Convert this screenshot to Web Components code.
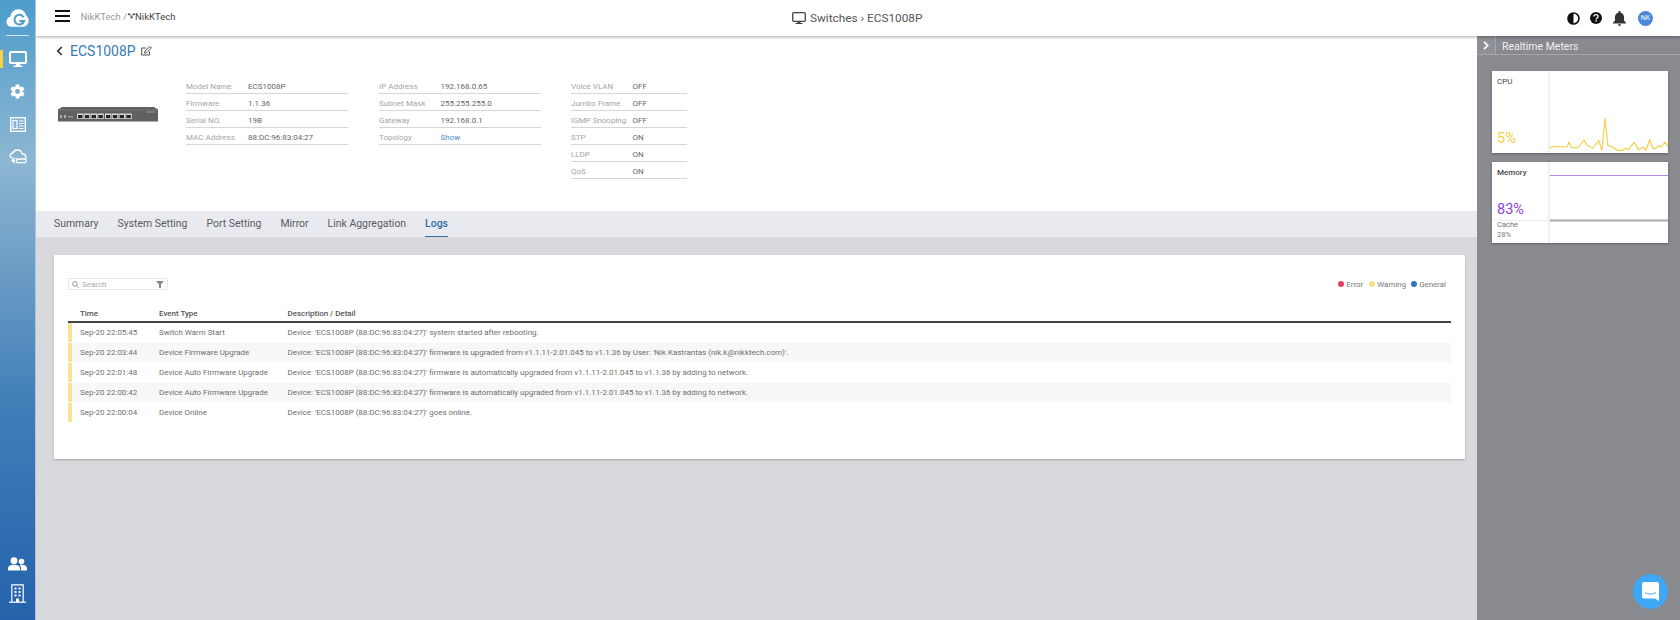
<!DOCTYPE html>
<html>
<head>
<meta charset="utf-8">
<title>ECS1008P</title>
<style>
  html, body { margin: 0; height: 100%; overflow: hidden; background: #d7d9dd; font-family: Roboto, "Liberation Sans", sans-serif; }
  app-shell { height: 620px; }
</style>
</head>
<body>
<app-shell>
  <side-nav slot="nav"></side-nav>
  <top-bar slot="top"></top-bar>
  <device-header slot="main"></device-header>
  <tab-bar slot="main" active="Logs"></tab-bar>
  <log-panel slot="main"></log-panel>
  <meters-panel slot="side">
    <meter-card label="CPU" value="5%" color="#f4d23f" kind="cpu"></meter-card>
    <meter-card label="Memory" value="83%" color="#8a3fd8" kind="memory"></meter-card>
  </meters-panel>
</app-shell>
<chat-bubble></chat-bubble>

<script>
class AppShell extends HTMLElement {
  constructor() {
    super();
    this.attachShadow({ mode: 'open' });
    this.shadowRoot.innerHTML = `
      <style>
        :host { display: flex; width: 1680px; }
        .col { flex: 1; display: flex; flex-direction: column; min-width: 0; }
        .row { flex: 1; display: flex; min-height: 0; }
        .main { flex: 1; display: flex; flex-direction: column; min-width: 0; }
      </style>
      <slot name="nav"></slot>
      <div class="col">
        <slot name="top"></slot>
        <div class="row">
          <div class="main"><slot name="main"></slot></div>
          <slot name="side"></slot>
        </div>
      </div>
    `;
  }
}

class SideNav extends HTMLElement {
  constructor() {
    super();
    this.attachShadow({ mode: 'open' });
    this.shadowRoot.innerHTML = `
      <style>
        :host { display: flex; flex-direction: column; align-items: center; width: 35px; height: 620px; border-right: 1px solid #a9c6de; background: linear-gradient(180deg, #4c9ccb 0%, #6ba9ce 12%, #8db6d2 26%, #6f9fc6 42%, #3f7db8 66%, #2463ab 100%); position: relative; z-index: 3; }
        .logo { height: 35px; width: 23px; border-bottom: 1px solid #cfe3f0; display: flex; align-items: center; justify-content: center; flex: none; }
        .item { width: 35px; height: 32.5px; display: flex; align-items: center; justify-content: center; flex: none; position: relative; }
        .item.active::before { content: ''; position: absolute; left: 0; top: 7px; width: 3px; height: 18px; background: #f6d24a; }
        .first { margin-top: 7px; }
        .spacer { flex: 1; }
        .bottom { height: 30px; }
        .people { padding-top: 2px; box-sizing: border-box; }
        .end { margin-bottom: 12px; }
        svg { display: block; }
      </style>
      <div class="logo">
        <svg width="25" height="22" viewBox="0 0 25 22">
          <path d="M6 20.500C2.800 20.500 .5 18 .5 15c0-2.700 1.800-4.800 4.300-5.300C5.200 5 9 1.500 13.500 1.500c4 0 7.300 2.700 8.300 6.400 1.700 1.300 2.800 3.500 2.800 6 0 3.700-2.800 6.600-6.500 6.600z" fill="#fff"/>
          <path d="M19.200 10.200a5.300 5.300 0 1 0 .4 4.200h-5" fill="none" stroke="#4d9dca" stroke-width="2.200"/>
        </svg>
      </div>
      <div class="item active first">
        <svg width="18" height="17" viewBox="0 0 18 17"><rect x="1" y="1" width="16" height="11" rx="1" fill="none" stroke="#fff" stroke-width="2"/><path d="M7 13h4v1.500H7zM4.500 14.500h9V16h-9z" fill="#fff"/></svg>
      </div>
      <div class="item">
        <svg width="17" height="17" viewBox="0 0 24 24"><path fill="#fff" d="M19.400 13c.1-.3.100-.7.100-1s0-.7-.1-1l2.100-1.600c.2-.2.200-.4.100-.6l-2-3.500c-.1-.2-.4-.3-.6-.2l-2.500 1c-.5-.4-1.100-.7-1.700-1l-.4-2.700c0-.2-.2-.4-.5-.4h-4c-.2 0-.4.200-.5.400l-.4 2.700c-.6.200-1.200.6-1.700 1l-2.500-1c-.2-.1-.5 0-.6.200l-2 3.500c-.1.200-.1.500.1.600L4.600 11c0 .3-.1.700-.1 1s0 .7.100 1l-2.100 1.600c-.2.200-.2.400-.1.600l2 3.500c.1.200.4.300.6.200l2.500-1c.5.400 1.100.7 1.700 1l.4 2.700c0 .2.200.4.500.4h4c.2 0 .4-.2.500-.4l.4-2.700c.6-.2 1.200-.6 1.700-1l2.500 1c.2.100.5 0 .6-.2l2-3.500c.1-.2.100-.5-.1-.6zM12 15.500a3.500 3.500 0 1 1 0-7 3.500 3.500 0 0 1 0 7z"/></svg>
      </div>
      <div class="item">
        <svg width="16" height="15" viewBox="0 0 16 15"><rect x=".7" y=".7" width="14.600" height="13.600" fill="none" stroke="#fff" stroke-width="1.400"/><rect x="3" y="3.500" width="4" height="8" fill="none" stroke="#fff" stroke-width="1.200"/><path d="M9 4h4.500M9 6.500h4.500M9 9h4.500M9 11.500h4.500" stroke="#fff" stroke-width="1.200"/></svg>
      </div>
      <div class="item">
        <svg width="18" height="16" viewBox="0 0 18 16"><path d="M3.500 9C1.500 8.500 1 7.200 1.300 6c.3-1.300 1.300-2 2.500-2C4.500 2.200 6.200 1 8.300 1c2.300 0 4.200 1.500 4.700 3.800 2.200 0 3.800 1.500 3.800 3.400 0 .5-.1.900-.3 1.300" fill="none" stroke="#fff" stroke-width="1.400"/><path d="M6 9 3 11.500 6 14" fill="none" stroke="#fff" stroke-width="1.300"/><path d="M3 11.500h3" stroke="#fff" stroke-width="1.300"/><rect x="7.500" y="10" width="9.500" height="3.600" rx=".8" fill="none" stroke="#fff" stroke-width="1.300"/></svg>
      </div>
      <div class="spacer"></div>
      <div class="item bottom people">
        <svg width="19" height="14" viewBox="0 0 19 14"><circle cx="6" cy="3.700" r="3.400" fill="#fff"/><circle cx="13.500" cy="4.500" r="2.800" fill="#fff"/><path d="M0 13.500v-2.300C0 9 2.700 7.700 6 7.700s6 1.300 6 3.500v2.300z" fill="#fff"/><path d="M13 13.500v-2.500c0-1.200-.5-2.200-1.400-3 .6-.2 1.300-.3 2-.3 2.700 0 5.400 1.200 5.400 3.200v2.600z" fill="#fff"/></svg>
      </div>
      <div class="item bottom end">
        <svg width="17" height="19" viewBox="0 0 17 19"><path d="M2.800 18V.8h11.400V18" fill="none" stroke="#fff" stroke-width="1.200"/><path d="M0 18.200h17" stroke="#fff" stroke-width="1.200"/><path d="M5.500 3.500h2v2h-2zM9.500 3.500h2v2h-2zM5.500 7h2v2h-2zM9.500 7h2v2h-2zM5.500 10.500h2v2h-2zM9.500 10.500h2v2h-2zM7 14.500h3V18H7z" fill="#fff"/></svg>
      </div>
    `;
  }
}

class TopBar extends HTMLElement {
  constructor() {
    super();
    this.attachShadow({ mode: 'open' });
    this.shadowRoot.innerHTML = `
      <style>
        :host { display: flex; align-items: center; height: 36px; background: #fff; box-shadow: 0 1px 3px rgba(0,0,0,.35); position: relative; z-index: 2; font-family: Roboto, sans-serif; }
        .left { flex: 1; display: flex; align-items: center; padding: 0 0 4px 19px; }
        .burger { width: 15px; height: 12px; border-top: 2px solid #111; border-bottom: 2px solid #111; position: relative; box-sizing: border-box; margin-right: 10.500px; }
        .burger::after { content: ''; position: absolute; left: 0; right: 0; top: 3px; height: 2px; background: #111; }
        .crumb { font-size: 9.500px; color: #9a9a9a; white-space: nowrap; display: flex; align-items: center; }
        .crumb b { font-weight: 400; color: #444; }
        .crumb svg { margin: 0 .5px 0 .5px; }
        .title { display: flex; align-items: center; font-size: 11.800px; color: #555; white-space: nowrap; position: absolute; left: 756px; }
        .title svg { margin-right: 4px; }
        .right { display: flex; align-items: center; padding-right: 27px; }
        .right > * { flex: none; }
        .avatar { width: 15px; height: 15px; border-radius: 50%; background: #4a86dc; color: #fff; font-size: 7px; display: flex; align-items: center; justify-content: center; margin-left: 12px; }
        .gap { margin-left: 10px; }
      </style>
      <div class="left">
        <div class="burger"></div>
        <div class="crumb">NikKTech&nbsp;/
          <svg width="7" height="6" viewBox="0 0 9 7"><circle cx="1.200" cy="1.200" r="1.100" fill="#333"/><circle cx="7.800" cy="1.200" r="1.100" fill="#333"/><circle cx="4.500" cy="5.500" r="1.300" fill="#333"/><path d="M1.200 1.200 4.500 5.500 7.800 1.200 4.500 2.500z" fill="none" stroke="#333" stroke-width=".6"/></svg>
          <b>NikKTech</b>
        </div>
      </div>
      <div class="title">
        <svg width="14" height="13" viewBox="0 0 14 13"><rect x=".7" y=".7" width="12.600" height="8.600" rx="1" fill="none" stroke="#444" stroke-width="1.300"/><path d="M5.500 10h3v1h-3zM3.500 11h7v1h-7z" fill="#444"/></svg>
        Switches › ECS1008P
      </div>
      <div class="right">
        <svg width="13" height="13" viewBox="0 0 13 13"><circle cx="6.500" cy="6.500" r="5.500" fill="#fff" stroke="#111" stroke-width="1.600"/><path d="M6.500 1a5.500 5.500 0 0 1 0 11z" fill="#111" transform="matrix(-1 0 0 1 13 0)"/></svg>
        <svg class="gap" width="12" height="12" viewBox="0 0 12 12"><circle cx="6" cy="6" r="6" fill="#111"/><path d="M3.900 4.600C3.900 3.400 4.800 2.600 6 2.600s2.100.8 2.100 1.900c0 1.500-2 1.500-2 3" fill="none" stroke="#fff" stroke-width="1.300"/><rect x="5.400" y="8.300" width="1.400" height="1.400" fill="#fff"/></svg>
        <svg class="gap" width="13" height="15" viewBox="0 0 13 15" style="margin-left:11px"><path d="M6.500 0c.7 0 1.100.5 1.100 1.200v.5c2.300.5 3.500 2.400 3.500 4.700v3.300L13 11.700v.8H0v-.8l1.900-2V6.400c0-2.300 1.200-4.200 3.500-4.700v-.5C5.400.5 5.800 0 6.500 0zM5 13.300h3C8 14.200 7.300 15 6.500 15S5 14.200 5 13.300z" fill="#333"/></svg>
        <div class="avatar">NK</div>
      </div>
    `;
  }
}

class InfoTable extends HTMLElement {
  constructor() {
    super();
    this.attachShadow({ mode: 'open' });
  }
  connectedCallback() {
    const rows = JSON.parse(this.getAttribute('rows'));
    const labelWidth = this.getAttribute('label-width');
    this.shadowRoot.innerHTML = `
      <style>
        :host { display: block; font-size: 8px; }
        .r { display: flex; height: 16.900px; box-sizing: border-box; align-items: center; padding-top: 3px; border-bottom: 1px solid #d6d6d6; }
        .l { width: ${labelWidth}px; color: #a5a5a5; flex: none; white-space: nowrap; }
        .v { color: #666; white-space: nowrap; }
        .v.link { color: #4a8cc8; }
      </style>
      ${rows.map(r => `<div class="r"><span class="l">${r[0]}</span><span class="v ${r[2] || ''}">${r[1]}</span></div>`).join('')}
    `;
  }
}

class DeviceHeader extends HTMLElement {
  constructor() {
    super();
    this.attachShadow({ mode: 'open' });
    const ports = [0, 1, 2, 3, 4, 5, 6, 7].map(i => {
      const x = 19 + i * 6.800 + (i > 3 ? .8 : 0);
      return `<rect x="${x}" y="6.500" width="6.400" height="5.500" fill="#d9d9d5"/><rect x="${x + 1}" y="8" width="4.400" height="3.200" fill="#232323"/>`;
    }).join('');
    this.shadowRoot.innerHTML = `
      <style>
        :host { display: block; height: 175px; background: #fff; box-sizing: border-box; padding: 0 0 0 18px; flex: none; }
        .head { display: flex; align-items: center; height: 29px; }
        .back { margin: 0 7px 0 2px; display: block; }
        h1 { margin: 0; font: 400 14px Roboto, sans-serif; color: #3a7ab5; }
        .edit { margin-left: 5px; display: block; }
        .body { display: flex; margin-top: 12.500px; }
        .pic { width: 132px; padding: 29px 0 0 4px; box-sizing: border-box; flex: none; }
        .pic svg { display: block; }
        info-table:nth-of-type(1) { width: 162px; }
        info-table:nth-of-type(2) { width: 162px; margin-left: 31px; }
        info-table:nth-of-type(3) { width: 116px; margin-left: 30px; }
      </style>
      <div class="head">
        <svg class="back" width="7" height="10" viewBox="0 0 7 10"><path d="M5.800 1 1.800 5l4 4" fill="none" stroke="#333" stroke-width="1.700"/></svg>
        <h1>ECS1008P</h1>
        <svg class="edit" width="11" height="10" viewBox="0 0 11 10"><path d="M8.500 5.500V9H.7V2h4.500" fill="none" stroke="#555" stroke-width="1"/><path d="M3.500 7.200 4 5l5-4.500 1.500 1.500-5 4.800z" fill="none" stroke="#555" stroke-width="1"/></svg>
      </div>
      <div class="body">
        <div class="pic">
          <svg width="100" height="15" viewBox="0 0 100 15">
            <path d="M0 2.500 4 0h92l4 2.500V14.500H0z" fill="#5f6062"/>
            <rect x="0" y="2.500" width="100" height="1" fill="#77787a"/>
            <rect x="2" y="8" width="2" height="3" fill="#aaa"/><rect x="6" y="8" width="2" height="3" fill="#aaa"/><rect x="10" y="9" width="5" height="1.500" fill="#999"/>
            ${ports}
            <rect x="88" y="4.500" width="9" height="1" fill="#999"/>
          </svg>
        </div>
        <info-table label-width="62" rows='[["Model Name","ECS1008P"],["Firmware","1.1.36"],["Serial NO.","19B"],["MAC Address","88:DC:96:83:04:27"]]'></info-table>
        <info-table label-width="61.500" rows='[["IP Address","192.168.0.65"],["Subnet Mask","255.255.255.0"],["Gateway","192.168.0.1"],["Topology","Show","link"]]'></info-table>
        <info-table label-width="61.500" rows='[["Voice VLAN","OFF"],["Jumbo Frame","OFF"],["IGMP Snooping","OFF"],["STP","ON"],["LLDP","ON"],["QoS","ON"]]'></info-table>
      </div>
    `;
  }
}

class TabBar extends HTMLElement {
  constructor() {
    super();
    this.attachShadow({ mode: 'open' });
  }
  connectedCallback() {
    const active = this.getAttribute('active');
    const tabs = ['Summary', 'System Setting', 'Port Setting', 'Mirror', 'Link Aggregation', 'Logs'];
    this.shadowRoot.innerHTML = `
      <style>
        :host { display: flex; gap: 19px; height: 26px; box-sizing: border-box; padding-left: 18px; background: #e8eaef; flex: none; font-size: 10.450px; }
        .t { color: #5c5c5c; display: flex; align-items: center; box-sizing: border-box; border-bottom: 1px solid transparent; padding-bottom: 1px; white-space: nowrap; }
        .t.on { color: #2f6ea5; font-weight: 500; border-bottom-color: #2f6ea5; }
      </style>
      ${tabs.map(t => `<div class="t ${t === active ? 'on' : ''}">${t}</div>`).join('')}
    `;
  }
}

const LOGS = [
  ['Sep-20 22:05:45', 'Switch Warm Start', "Device: 'ECS1008P (88:DC:96:83:04:27)' system started after rebooting."],
  ['Sep-20 22:03:44', 'Device Firmware Upgrade', "Device: 'ECS1008P (88:DC:96:83:04:27)' firmware is upgraded from v1.1.11-2.01.045 to v1.1.36 by User: 'Nik Kastrantas (nik.k@nikktech.com)'."],
  ['Sep-20 22:01:48', 'Device Auto Firmware Upgrade', "Device: 'ECS1008P (88:DC:96:83:04:27)' firmware is automatically upgraded from v1.1.11-2.01.045 to v1.1.36 by adding to network."],
  ['Sep-20 22:00:42', 'Device Auto Firmware Upgrade', "Device: 'ECS1008P (88:DC:96:83:04:27)' firmware is automatically upgraded from v1.1.11-2.01.045 to v1.1.36 by adding to network."],
  ['Sep-20 22:00:04', 'Device Online', "Device: 'ECS1008P (88:DC:96:83:04:27)' goes online."]
];

class LogPanel extends HTMLElement {
  constructor() {
    super();
    this.attachShadow({ mode: 'open' });
    this.shadowRoot.innerHTML = `
      <style>
        :host { display: block; flex: 1; padding: 18px 12px 0 18px; background: #d7d9dd; }
        .card { height: 204px; background: #fff; box-shadow: 0 1px 2px rgba(0,0,0,.25); box-sizing: border-box; padding: 23px 14px 0 14px; font-size: 7.960px; }
        .tools { display: flex; align-items: center; justify-content: space-between; height: 12px; }
        .search { width: 100px; height: 12px; box-sizing: border-box; border: 1px solid #e8e8e8; display: flex; align-items: center; padding: 0 3px; color: #aaa; }
        .search svg:first-child { margin-right: 3px; }
        .search span { flex: 1; }
        .legend { display: flex; align-items: center; color: #777; padding-right: 5px; font-size: 7.900px; }
        .dot { width: 6px; height: 6px; border-radius: 50%; margin: 0 2px 0 4px; }
        .row { display: grid; grid-template-columns: 79px 128.500px 1fr; padding-left: 12px; align-items: center; white-space: nowrap; }
        .hd { height: 21px; margin-top: 12px; box-sizing: border-box; border-bottom: 2px solid #444; font-weight: 500; color: #555; padding-top: 3px; }
        .log { height: 19px; margin-bottom: 1px; border-left: 4px solid #f8e394; padding-left: 8px; color: #6e6e6e; }
        .log.alt { background: #f7f7f7; }
      </style>
      <div class="card">
        <div class="tools">
          <div class="search">
            <svg width="7" height="7" viewBox="0 0 7 7"><circle cx="2.900" cy="2.900" r="2.300" fill="none" stroke="#888" stroke-width=".9"/><path d="M4.600 4.600 6.700 6.700" stroke="#888" stroke-width=".9"/></svg>
            <span>Search</span>
            <svg width="8" height="7" viewBox="0 0 8 7"><path d="M0 0h8L5 3.500V7H3V3.500z" fill="#888"/></svg>
          </div>
          <div class="legend">
            <i class="dot" style="background:#e2405f"></i>Error
            <i class="dot" style="background:#f7e08a;margin-left:6px"></i>Warning
            <i class="dot" style="background:#2f74c8;margin-left:5px"></i>General
          </div>
        </div>
        <div class="row hd"><span>Time</span><span>Event Type</span><span>Description / Detail</span></div>
        ${LOGS.map((l, i) => `<div class="row log ${i % 2 ? 'alt' : ''}"><span>${l[0]}</span><span>${l[1]}</span><span>${l[2]}</span></div>`).join('')}
      </div>
    `;
  }
}

class MetersPanel extends HTMLElement {
  constructor() {
    super();
    this.attachShadow({ mode: 'open' });
    this.shadowRoot.innerHTML = `
      <style>
        :host { display: flex; flex-direction: column; width: 203px; background: #898a8f; flex: none; height: 584px; }
        .bar { display: flex; align-items: center; height: 19px; box-sizing: border-box; border-bottom: 1px solid #a6a7ab; color: #f0f0f0; font-size: 10.500px; flex: none; }
        .bar span { padding-top: 2px; }
        .toggle { width: 19px; height: 18px; box-sizing: border-box; border-right: 1px solid #a6a7ab; display: flex; align-items: center; justify-content: center; margin-right: 6px; background: #8f9095; }
        .body { display: flex; flex-direction: column; gap: 9px; padding: 16px 12px 0 15px; }
      </style>
      <div class="bar">
        <div class="toggle"><svg width="6" height="9" viewBox="0 0 6 9"><path d="M1 .8 4.700 4.500 1 8.200" fill="none" stroke="#fff" stroke-width="1.700"/></svg></div>
        <span>Realtime Meters</span>
      </div>
      <div class="body"><slot></slot></div>
    `;
  }
}

// points traced off the CPU sparkline, in chart px
const CPU_POINTS = [[0,64],[2.300,62],[5.700,61.300],[10.700,61.700],[18,62],[20,57.300],[22.700,62.700],[29,62.700],[35,55],[38,60.300],[44,63],[49.700,55.700],[53,65.300],[56,33.300],[59,60.700],[64,62],[68,65.300],[74,65.300],[76.700,63.300],[79.300,64.700],[85.300,57.300],[89.300,64.700],[94,62],[97,65.300],[100.700,54.700],[104,63.300],[106.700,63.300],[109.700,60.700],[112.300,62],[116,57],[119,62]];

class MeterCard extends HTMLElement {
  constructor() {
    super();
    this.attachShadow({ mode: 'open' });
  }
  connectedCallback() {
    const label = this.getAttribute('label');
    const value = this.getAttribute('value');
    const color = this.getAttribute('color');
    const memory = this.getAttribute('kind') === 'memory';
    const chart = memory
      ? `<svg width="118" height="82" viewBox="0 0 118 82"><path d="M0 13.500h118" stroke="#b48be0" stroke-width="1"/><path d="M0 58.500h118" stroke="#aaa" stroke-width="2"/></svg>`
      : `<svg width="118" height="82" viewBox="0 0 118 82"><polyline points="${CPU_POINTS.map(p => p.join(',')).join(' ')}" transform="translate(-1,14)" fill="none" stroke="#f2d14f" stroke-width="1.200"/></svg>`;
    this.shadowRoot.innerHTML = `
      <style>
        :host { display: flex; height: ${memory ? 81 : 82}px; width: 176px; background: #fff; box-shadow: 0 1px 2px rgba(0,0,0,.3); overflow: hidden; flex: none; }
        .left { width: 58px; flex: none; box-sizing: border-box; border-right: 2px solid #f1f1f1; padding: 6px 0 0 5px; display: flex; flex-direction: column; font-size: 8px; color: #484848; }
        .name { height: ${memory ? 33 : 53}px; font-weight: ${memory ? 500 : 400}; }
        .val { font-size: 14.500px; color: ${color}; line-height: 18px; }
        .cache { margin: 1px 0 0 -5px; padding-left: 5px; background: linear-gradient(#eee, #eee) 0 0 / 100% 1px no-repeat; color: #777; line-height: 10px; font-size: 7.500px; }
        svg { display: block; }
      </style>
      <div class="left">
        <div class="name">${label}</div>
        <div class="val">${value}</div>
        ${memory ? '<div class="cache">Cache<br>28%</div>' : ''}
      </div>
      ${chart}
    `;
  }
}

class ChatBubble extends HTMLElement {
  constructor() {
    super();
    this.attachShadow({ mode: 'open' });
    this.shadowRoot.innerHTML = `
      <style>
        :host { position: fixed; left: 1633px; top: 574px; width: 35px; height: 35px; border-radius: 50%; background: #3ea8f4; display: flex; align-items: center; justify-content: center; z-index: 5; }
        svg { display: block; }
      </style>
      <svg width="17" height="19" viewBox="0 0 17 19"><path d="M2 0h13a2 2 0 0 1 2 2v17l-4-2.500H2a2 2 0 0 1-2-2V2a2 2 0 0 1 2-2z" fill="#fff"/><path d="M3 10.500c3 2 8 2 11 0" fill="none" stroke="#3ea8f4" stroke-width="1"/></svg>
    `;
  }
}

customElements.define('app-shell', AppShell);
customElements.define('side-nav', SideNav);
customElements.define('top-bar', TopBar);
customElements.define('info-table', InfoTable);
customElements.define('device-header', DeviceHeader);
customElements.define('tab-bar', TabBar);
customElements.define('log-panel', LogPanel);
customElements.define('meters-panel', MetersPanel);
customElements.define('meter-card', MeterCard);
customElements.define('chat-bubble', ChatBubble);
</script>
</body>
</html>
